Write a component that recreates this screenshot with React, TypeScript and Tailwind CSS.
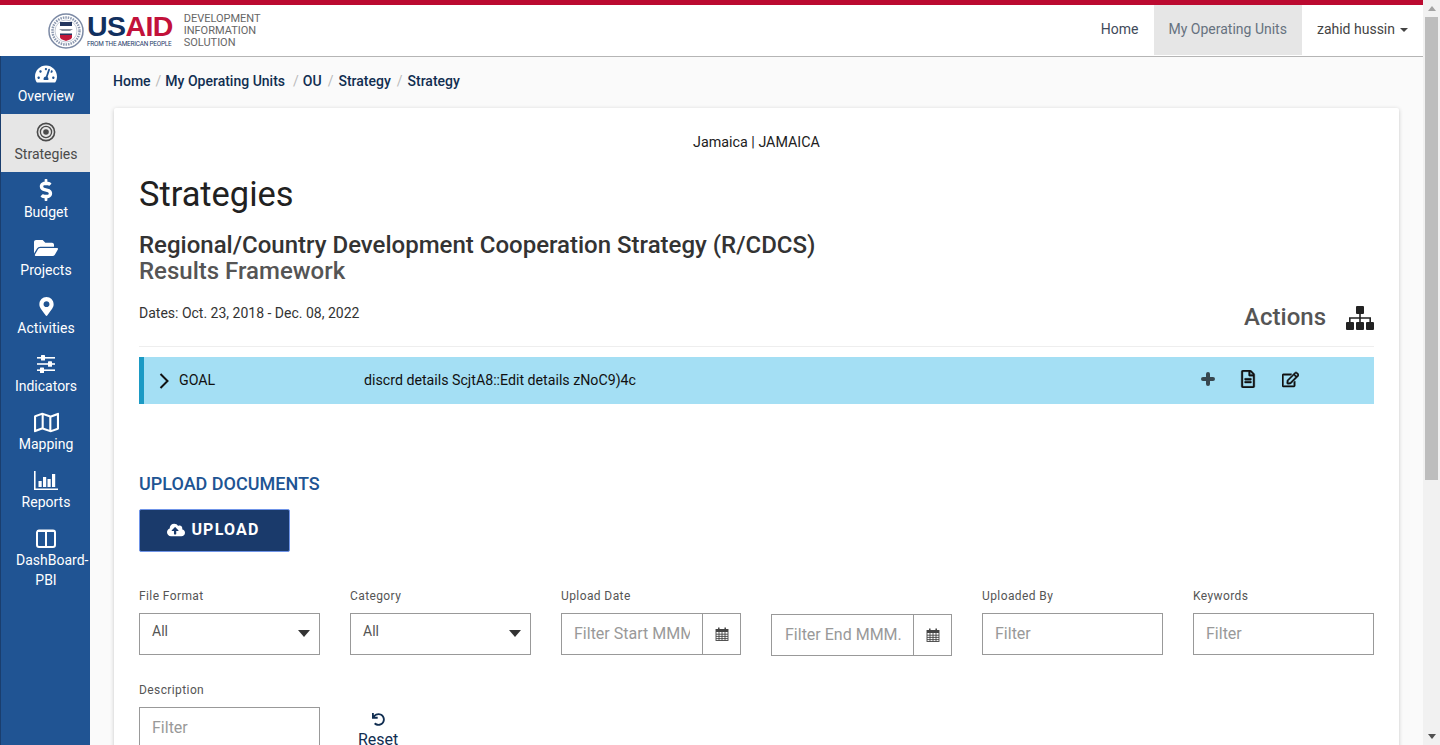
import React from 'react';
import {
  FaCloudUploadAlt,
  FaDollarSign,
  FaFolderOpen,
  FaMapMarkerAlt,
  FaRegEdit,
  FaRegFileAlt,
  FaRegMap,
  FaTachometerAlt,
  FaUndo,
} from 'react-icons/fa';

const TargetIcon = () => (
  <svg width="20" height="20" viewBox="0 0 20 20" fill="none" stroke="currentColor">
    <circle cx="10" cy="10" r="8.6" strokeWidth="1.6" />
    <circle cx="10" cy="10" r="5.6" strokeWidth="1.3" />
    <circle cx="10" cy="10" r="2.8" fill="currentColor" stroke="none" />
  </svg>
);

const SlidersIcon = () => (
  <svg width="20" height="18" viewBox="0 0 20 18" fill="currentColor">
    <rect x="1" y="2" width="18" height="1.6" />
    <rect x="1" y="8.2" width="18" height="1.6" />
    <rect x="1" y="14.4" width="18" height="1.6" />
    <rect x="5" y="0" width="4" height="5.6" rx="0.6" />
    <rect x="12" y="6.2" width="4" height="5.6" rx="0.6" />
    <rect x="4" y="12.4" width="4" height="5.6" rx="0.6" />
  </svg>
);

const BarsIcon = () => (
  <svg width="24" height="19" viewBox="0 0 24 19" fill="currentColor">
    <path d="M0 0h1.6v17.4H24V19H0z" />
    <rect x="4.5" y="10" width="3.2" height="6" />
    <rect x="9" y="6" width="3.2" height="10" />
    <rect x="13.5" y="8" width="3.2" height="8" />
    <rect x="18" y="3" width="3.2" height="13" />
  </svg>
);

const ColumnsIcon = () => (
  <svg width="20" height="19" viewBox="0 0 20 19" fill="none" stroke="currentColor" strokeWidth="2">
    <path d="M3 1.5h14a2 2 0 0 1 2 2V16a2 2 0 0 1-2 2H3a2 2 0 0 1-2-2V3.500a2 2 0 0 1 2-2z" />
    <path d="M10 1.500V18M1 2h18" />
  </svg>
);

const SitemapIcon = () => (
  <svg width="28" height="24" viewBox="0 0 28 24" fill="#222">
    <rect x="10" y="0" width="8" height="8" rx="1" />
    <rect x="0" y="16" width="8" height="8" rx="1" />
    <rect x="10" y="16" width="8" height="8" rx="1" />
    <rect x="20" y="16" width="8" height="8" rx="1" />
    <path d="M13.200 8h1.600v3.200H25v4.800h-1.600v-3.200h-8.600V16h-1.600v-3.200H4.600V16H3v-4.800h10.200z" />
  </svg>
);

const ChevronIcon = () => (
  <svg width="10" height="16" viewBox="0 0 10 16" fill="none" stroke="#111" strokeWidth="2">
    <path d="M1.500 1l7 7-7 7" />
  </svg>
);

const PlusIcon = () => (
  <svg width="14" height="14" viewBox="0 0 14 14" fill="none" stroke="#37474f" strokeWidth="4" strokeLinecap="round">
    <path d="M7 2v10M2 7h10" />
  </svg>
);

const CalendarIcon = () => (
  <svg width="14" height="14" viewBox="0 0 14 14" fill="none" stroke="#444" strokeWidth="0.9">
    <rect x="1" y="2.500" width="12" height="11" fill="#fff" />
    <rect x="1" y="2" width="12" height="3" fill="#444" stroke="none" />
    <path d="M1 7.200h12M1 9.400h12M1 11.600h12M4 5v8.500M7 5v8.500M10 5v8.500" />
    <path d="M3.800 0.500v3M10.200 0.500v3" strokeWidth="1.500" />
  </svg>
);

const NAV_ITEMS = [
  { label: 'Overview', icon: <FaTachometerAlt size={22} /> },
  { label: 'Strategies', icon: <TargetIcon />, active: true },
  { label: 'Budget', icon: <FaDollarSign size={22} /> },
  { label: 'Projects', icon: <FaFolderOpen size={24} /> },
  { label: 'Activities', icon: <FaMapMarkerAlt size={19} /> },
  { label: 'Indicators', icon: <SlidersIcon /> },
  { label: 'Mapping', icon: <FaRegMap size={25} /> },
  { label: 'Reports', icon: <BarsIcon /> },
];

const Sidebar = () => (
  <aside className="w-[90px] shrink-0 bg-[#205493] border-l border-[#1a3e6e]">
    {NAV_ITEMS.map(item => (
      <div
        key={item.label}
        className={`h-[58px] flex flex-col items-center pt-[6px] pl-[1px] text-[14px] leading-5 ${
          item.active ? 'bg-[#e6e6e6] text-[#4a4a4a]' : 'text-white'
        }`}
      >
        <div className="h-[24px] flex items-center justify-center">{item.icon}</div>
        <span>{item.label}</span>
      </div>
    ))}
    <div className="flex flex-col items-center pt-[6px] pl-[1px] text-[14px] leading-5 text-white">
      <div className="h-[24px] flex items-center justify-center">
        <ColumnsIcon />
      </div>
      <span className="self-start ml-[14px] whitespace-nowrap">DashBoard-</span>
      <span>PBI</span>
    </div>
  </aside>
);

const Logo = () => (
  <div className="flex items-center">
    <svg width="36" height="36" viewBox="0 0 36 36" className="ml-[1px] mr-[3px]">
      <circle cx="18" cy="18" r="17" fill="#fff" stroke="#7c8aa5" strokeWidth="1.5" />
      <circle cx="18" cy="18" r="13.5" fill="none" stroke="#8d99b0" strokeWidth="2.5" strokeDasharray="1.5 1" />
      <circle cx="18" cy="18" r="11" fill="#fff" stroke="#9aa5b8" strokeWidth="0.6" />
      <rect x="12" y="9" width="12" height="4" fill="#25375f" />
      <path d="M11 16h14l-3 2h-8z" fill="#8d93a0" />
      <path d="M12 22h12v2c0 2-3 3-6 4-3-1-6-2-6-4z" fill="#c2183a" />
      <rect x="12" y="20.500" width="12" height="1.500" fill="#25375f" />
    </svg>
    <div className="flex flex-col items-start">
      <div className="h-[25px] text-[28.5px] leading-[25px] font-bold font-['Liberation_Sans',sans-serif] tracking-[-0.6px]">
        <span className="text-[#12305f]">US</span>
        <span className="text-[#c2113a]">AID</span>
      </div>
      <div className="mt-[2px] w-[85px] text-[6.4px] leading-[7px] text-[#1d3a68] whitespace-nowrap tracking-[-0.2px]">
        FROM THE AMERICAN PEOPLE
      </div>
    </div>
  </div>
);

const TopNav = () => (
  <header className="h-[51px] shrink-0 flex bg-white">
    <div className="ml-[47px] flex items-center">
      <Logo />
      <div className="ml-[11px] pt-[1px] text-[11px] leading-3 text-[#666]">
        <div>DEVELOPMENT</div>
        <div>INFORMATION</div>
        <div>SOLUTION</div>
      </div>
    </div>
    <nav className="ml-auto flex text-[14px] h-[50px]">
      <div className="px-[15px] pb-[2px] flex items-center text-[#3f4a5a]">Home</div>
      <div className="px-[15px] pb-[2px] flex items-center bg-[#e6e6e6] text-[#66727f]">My Operating Units</div>
      <div className="px-[15px] pb-[2px] flex items-center text-[#444]">
        zahid hussin
        <div className="ml-[5px] mt-[1px] w-0 h-0 border-x-[4px] border-x-transparent border-t-[4px] border-t-[#444]" />
      </div>
    </nav>
  </header>
);

const Breadcrumbs = () => (
  <div className="h-[51px] pb-[3px] ml-[23px] flex items-center text-[14px] font-medium text-[#112e51]">
    <span>Home</span>
    <span className="ml-[5px] mr-[4px] font-normal text-[#bbb]">/</span>
    <span>My Operating Units</span>
    <span className="ml-[8px] mr-[4px] font-normal text-[#bbb]">/</span>
    <span>OU</span>
    <span className="ml-[6px] mr-[5px] font-normal text-[#bbb]">/</span>
    <span>Strategy</span>
    <span className="ml-[6px] mr-[5px] font-normal text-[#bbb]">/</span>
    <span>Strategy</span>
  </div>
);

const Field = ({ label, children, className = 'w-[181px]' }: { label: string; children: React.ReactNode; className?: string }) => (
  <div className={`shrink-0 ${className}`}>
    <div className="h-[17px] text-[12px] leading-[17px] tracking-[0.4px] text-[#555] mb-[8px]">{label}</div>
    {children}
  </div>
);

const SelectBox = () => (
  <div className="h-[42px] border border-[#999] flex items-start justify-between pl-[12px] pr-[9px] text-[14px] text-[#555]">
    <span className="mt-[7px]">All</span>
    <div className="mt-[16px] w-0 h-0 border-x-[6px] border-x-transparent border-t-[7px] border-t-[#333]" />
  </div>
);

const TextBox = () => (
  <div className="h-[42px] border border-[#999] flex items-center pl-[12px] text-[16px] text-[#999]">Filter</div>
);

const DateBox = ({ placeholder, inset = 'pl-[12px]' }: { placeholder: string; inset?: string }) => (
  <div className="h-[42px] border border-[#999] flex items-center text-[16px] text-[#999]">
    <div className={`flex-1 min-w-0 overflow-hidden whitespace-nowrap mr-[12px] ${inset}`}>{placeholder}</div>
    <div className="w-[38px] h-full shrink-0 border-l border-[#999] flex items-center justify-center">
      <CalendarIcon />
    </div>
  </div>
);

const GoalRow = () => (
  <div className="mt-[10px] h-[47px] flex items-center bg-[#a4dff4] border-l-[5px] border-[#1b9ac4] text-[14.2px] text-[#111]">
    <div className="ml-[15px] w-[10px]">
      <ChevronIcon />
    </div>
    <span className="ml-[10px] w-[185px]">GOAL</span>
    <span>discrd details ScjtA8::Edit details zNoC9)4c</span>
    <div className="ml-auto mb-[3px] flex items-center mr-[75px]">
      <PlusIcon />
      <FaRegFileAlt size={18} stroke="currentColor" strokeWidth={10} className="ml-[24px]" />
      <FaRegEdit size={17} stroke="currentColor" strokeWidth={16} className="ml-[25px]" />
    </div>
  </div>
);

export default function App() {
  return (
    <div className="h-[745px] w-[1440px] overflow-hidden flex font-['Roboto',sans-serif] bg-[#fafafa]">
      <div className="w-[1423px] flex flex-col shrink-0">
        <div className="h-[5px] shrink-0 bg-[#bb0a30]" />
        <TopNav />
        <div className="flex flex-1 min-h-0">
          <Sidebar />
          <main className="flex-1 min-w-0 border-t border-[#b5b5b5]">
            <Breadcrumbs />
            <div className="ml-[24px] mr-[24px] h-[700px] bg-white rounded-[2px] shadow-[0_1px_4px_rgba(0,0,0,0.2)] px-[25px]">
              <div className="pt-[25px] text-center text-[14.3px] leading-[18px] text-[#212121]">Jamaica | JAMAICA</div>
              <h1 className="mt-[19px] text-[34.4px] leading-[48px] text-[#212121]">Strategies</h1>
              <h2 className="mt-[14px] text-[24px] leading-[27px] font-medium text-[#333]">
                Regional/Country Development Cooperation Strategy (R/CDCS)
              </h2>
              <h3 className="text-[24px] leading-[24px] font-medium text-[#555]">Results Framework</h3>
              <div className="h-[64px] flex items-start justify-between border-b border-[#eee]">
                <div className="mt-[20px] text-[14px] leading-5 text-[#333]">Dates: Oct. 23, 2018 - Dec. 08, 2022</div>
                <div className="mt-[18px] flex items-center">
                  <span className="text-[24px] leading-8 font-medium text-[#555]">Actions</span>
                  <div className="ml-[20px] mt-[1px]">
                    <SitemapIcon />
                  </div>
                </div>
              </div>
              <GoalRow />
              <h4 className="mt-[70px] text-[18px] leading-5 font-medium text-[#205493]">UPLOAD DOCUMENTS</h4>
              <button className="mt-[15px] w-[151px] h-[43px] pr-[2px] pb-[2px] flex items-center justify-center bg-[#1a3a6b] border border-[#6f94e8] rounded-[2px] text-white text-[16px] font-bold tracking-[1.2px]">
                <FaCloudUploadAlt size={18} className="mr-[6px]" />
                UPLOAD
              </button>
              <div className="mt-[36px] flex justify-between">
                <Field label="File Format"><SelectBox /></Field>
                <Field label="Category"><SelectBox /></Field>
                <Field label="Upload Date" className="w-[180px]"><DateBox placeholder="Filter Start MMM" /></Field>
                <Field label="&nbsp;" className="w-[181px] pt-[1px]"><DateBox placeholder="Filter End MMM." inset="pl-[13px]" /></Field>
                <Field label="Uploaded By"><TextBox /></Field>
                <Field label="Keywords"><TextBox /></Field>
              </div>
              <div className="mt-[26px] flex">
                <Field label="Description"><TextBox /></Field>
                <div className="ml-[38px] mt-[31px] flex flex-col items-center text-[16px] leading-5 text-[#112e51]">
                  <FaUndo size={13} />
                  <span className="mt-[4px]">Reset</span>
                </div>
              </div>
            </div>
          </main>
        </div>
      </div>
      <div className="w-[17px] shrink-0 bg-[#f1f1f1] flex flex-col">
        <div className="h-[17px] flex items-center justify-center">
          <div className="w-0 h-0 border-x-[4px] border-x-transparent border-b-[5px] border-b-[#a3a3a3]" />
        </div>
        <div className="h-[463px] mx-[2px] bg-[#bdbdbd]" />
        <div className="mt-auto h-[17px] flex items-center justify-center">
          <div className="w-0 h-0 border-x-[4px] border-x-transparent border-t-[5px] border-t-[#505050]" />
        </div>
      </div>
    </div>
  );
}
